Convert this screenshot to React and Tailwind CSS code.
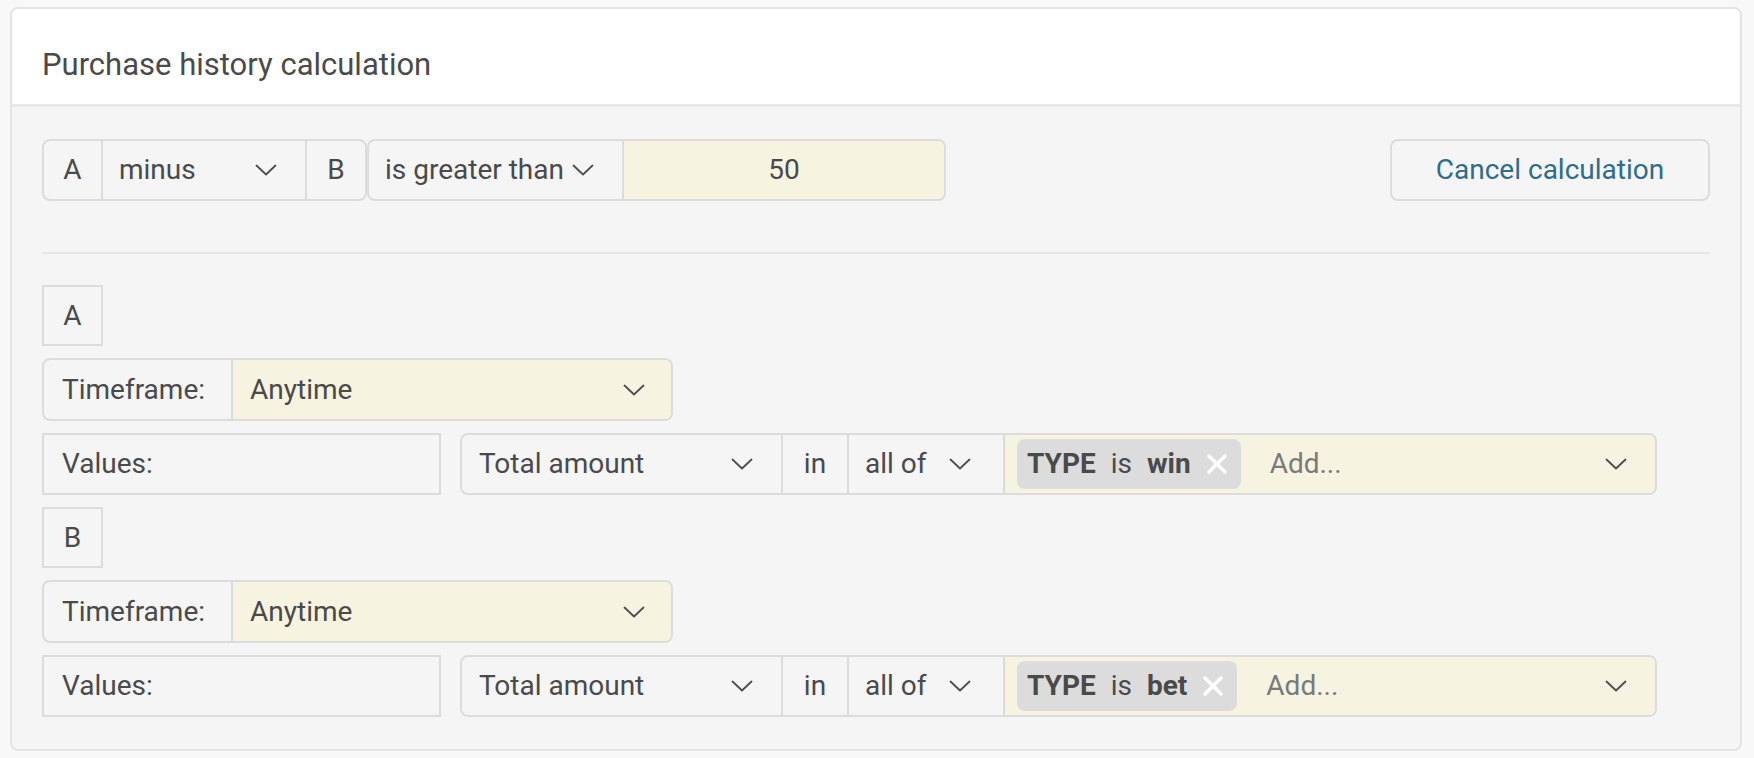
import React from 'react';

const Chevron = ({ className = '' }) => (
  <svg width="22" height="12" viewBox="0 0 22 12" fill="none" className={className}>
    <polyline points="1.5,1.5 11,10.5 20.5,1.5" stroke="#4d4d4d" strokeWidth="1.8" strokeLinecap="round" strokeLinejoin="round" />
  </svg>
);

const CloseX = () => (
  <svg width="22" height="22" viewBox="0 0 22 22" fill="none">
    <line x1="3" y1="3" x2="19" y2="19" stroke="#ffffff" strokeWidth="3.5" strokeLinecap="round" />
    <line x1="19" y1="3" x2="3" y2="19" stroke="#ffffff" strokeWidth="3.5" strokeLinecap="round" />
  </svg>
);

// one of the A / B operand blocks
const OperandBlock = ({ letter, tagValue }) => (
  <div className="flex flex-col gap-[12px]">
    <div className="w-[61px] h-[61px] border-2 border-[#dcdcdc] flex items-center justify-center">
      {letter}
    </div>

    <div className="flex w-[631px] h-[63px] border-2 border-[#dcdcdc] rounded-lg overflow-hidden">
      <div className="w-[189px] flex items-center pl-[18px] border-r-2 border-[#dcdcdc]">Timeframe:</div>
      <div className="flex-1 flex items-center justify-between pl-[17px] pr-[26px] bg-[#f6f3e1]">
        <span>Anytime</span>
        <Chevron />
      </div>
    </div>

    <div className="flex items-stretch gap-[19px] h-[62px]">
      <div className="w-[399px] border-2 border-[#dcdcdc] flex items-center pl-[18px]">Values:</div>
      <div className="flex w-[1197px] border-2 border-[#dcdcdc] rounded-lg overflow-hidden">
        <div className="w-[321px] flex items-center justify-between pl-[17px] pr-[28px] border-r-2 border-[#dcdcdc]">
          <span>Total amount</span>
          <Chevron />
        </div>
        <div className="w-[66px] flex items-center justify-center border-r-2 border-[#dcdcdc]">in</div>
        <div className="w-[156px] flex items-center justify-between pl-[16px] pr-[32px] border-r-2 border-[#dcdcdc]">
          <span>all of</span>
          <Chevron />
        </div>
        <div className="flex-1 flex items-center bg-[#f6f3e1] pl-[12px] pr-[28px]">
          <div className="h-[50px] flex items-center gap-[15px] bg-[#dcdcdc] rounded-lg pl-[10px] pr-[13px]">
            <span className="font-bold">TYPE</span>
            <span>is</span>
            <span className="font-bold">{tagValue}</span>
            <CloseX />
          </div>
          <span className="ml-[29px] text-[#7a7a7a]">Add...</span>
          <Chevron className="ml-auto" />
        </div>
      </div>
    </div>
  </div>
);

export default function App() {
  return (
    <div
      className="min-h-[758px] bg-[#f8f8f8] pt-[7px] pl-[10px] pr-[12px] pb-[10px] text-[28px] text-[#4a4a4a]"
      style={{ fontFamily: 'Roboto, "Liberation Sans", sans-serif' }}
    >
      <div className="border-2 border-[#e4e4e4] rounded-lg overflow-hidden bg-[#f5f5f5]">
        {/* header */}
        <div className="h-[98px] bg-white flex items-center pl-[30px] pt-[18px] border-b-[3px] border-[#e8e8e8] text-[31px]">
          Purchase history calculation
        </div>

        <div className="px-[30px] pt-[32px] pb-[32px]">
          {/* formula row */}
          <div className="flex items-center justify-between h-[62px]">
            <div className="flex h-full">
              <div className="flex border-2 border-[#dcdcdc] rounded-lg overflow-hidden">
                <div className="w-[59px] flex items-center justify-center border-r-2 border-[#dcdcdc]">A</div>
                <div className="w-[204px] flex items-center justify-between pl-[16px] pr-[28px] border-r-2 border-[#dcdcdc]">
                  <span>minus</span>
                  <Chevron />
                </div>
                <div className="w-[58px] flex items-center justify-center">B</div>
              </div>
              <div className="flex border-2 border-[#dcdcdc] rounded-lg overflow-hidden">
                <div className="w-[255px] flex items-center justify-between pl-[16px] pr-[28px] border-r-2 border-[#dcdcdc]">
                  <span>is greater than</span>
                  <Chevron />
                </div>
                <div className="w-[320px] flex items-center justify-center bg-[#f6f3e1]">50</div>
              </div>
            </div>
            <button className="w-[320px] h-full border-2 border-[#dcdcdc] rounded-lg text-[#2e6d8b] flex items-center justify-center">
              Cancel calculation
            </button>
          </div>

          <div className="h-[2px] bg-[#e6e6e6] mt-[51px] mb-[31px]" />

          <div className="flex flex-col gap-[12px]">
            <OperandBlock letter="A" tagValue="win" />
            <OperandBlock letter="B" tagValue="bet" />
          </div>
        </div>
      </div>
    </div>
  );
}
